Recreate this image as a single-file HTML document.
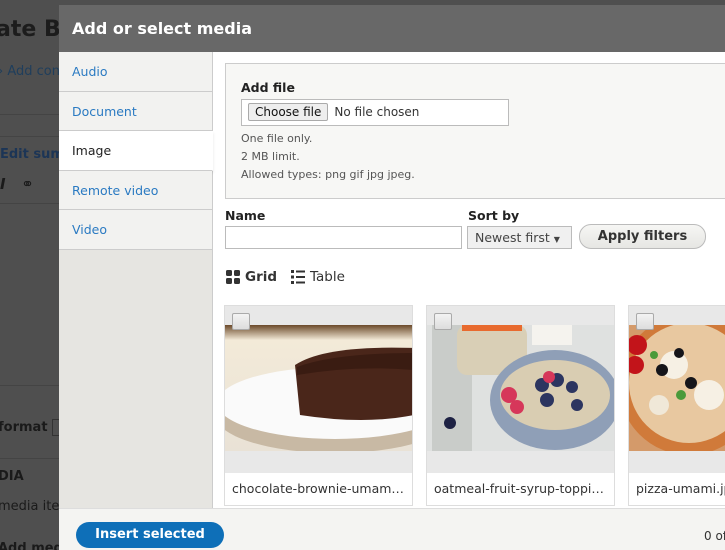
<!DOCTYPE html>
<html><head><meta charset="utf-8"><style>
*{box-sizing:border-box;margin:0;padding:0}
html,body{width:725px;height:550px;overflow:hidden}
body{background:#4f4f4f;font-family:"DejaVu Sans","Liberation Sans",sans-serif;position:relative}
.bg{position:absolute;color:#1a1a1a;font-size:13px;white-space:nowrap}
.dlg{position:absolute;left:59px;top:5px;width:666px;height:545px;background:#fff;overflow:hidden}
.hd{height:47px;background:#686868;color:#fff;font-weight:bold;font-size:16px;padding:14px 0 0 13px}
.side{position:absolute;left:0;top:47px;width:154px;height:460px;background:#e6e5e1;border-right:1px solid #ccc}
.tab{height:39.5px;border-bottom:1px solid #ccc;background:#f2f2f0;color:#2a7ac2;font-size:12.5px;padding:12px 0 0 13px}
.tab.on{background:#fff;color:#222;border-right:1px solid #fff;margin-right:-1px;box-shadow:0 2px 3px rgba(0,0,0,.1)}
.upl{position:absolute;left:166px;top:58px;width:520px;height:136px;background:#f7f7f5;border:1px solid #ccc;padding:16px 0 0 15px;font-size:11px;color:#555}
.lbl{font-weight:bold;font-size:12.5px;color:#222}
.file{margin-top:4px;width:268px;height:27px;border:1px solid #bbb;background:#fff;font-size:12px;color:#333;padding:3px 0 0 6px}
.file span{display:inline-block;background:#eee;border:1px solid #aaa;border-radius:2px;padding:1px 6px;margin-right:6px;color:#111}
.main{position:absolute}
.card{position:absolute;top:300px;width:189px;height:201px;background:#e8e8e8;border:1px solid #ddd}
.card .img{position:absolute;left:0;top:19px;width:100%;height:126px;overflow:hidden}
.card .cb{position:absolute;left:7px;top:7px;width:18px;height:17px;border:1px solid #aaa;border-radius:2px;background:linear-gradient(#f3f3f3,#ddd);z-index:2}
.card .nm{position:absolute;left:0;bottom:0;width:100%;height:32px;background:#fff;font-size:12.5px;color:#333;padding:8px 0 0 7px;white-space:nowrap;overflow:hidden}
.ft{position:absolute;left:0;top:503px;width:666px;height:42px;background:#f4f4f2;border-top:1px solid #ddd}
.btn{position:absolute;left:17px;top:13px;width:148px;height:26px;border-radius:13px;background:#0e6fb8;color:#fff;font-weight:bold;font-size:13px;text-align:center;line-height:26px}
</style></head><body>
<div class="bg" style="left:-4px;top:17px;font-size:22px;font-weight:bold;color:#1c1c1c">ate Ba</div>
<div class="bg" style="left:-2px;top:64px;color:#1f3e5c">› Add cont</div>
<div class="bg" style="left:0;top:114px;width:60px;border-top:1px solid #444"></div>
<div class="bg" style="left:0;top:147px;font-weight:bold;color:#1c3556">Edit sum</div>
<div class="bg" style="left:0;top:136px;width:60px;border-top:1px solid #444"></div>
<div class="bg" style="left:0;top:175px;font-style:italic;font-weight:bold;font-size:15px">I &nbsp;&nbsp;<span style="font-style:normal">⚭</span></div>
<div class="bg" style="left:0;top:203px;width:60px;border-top:1px solid #444"></div>
<div class="bg" style="left:0;top:385px;width:60px;border-top:1px solid #444"></div>
<div class="bg" style="left:-2px;top:420px;font-weight:bold">format <span style="border:1px solid #333;padding:0 6px;font-weight:normal">E</span></div>
<div class="bg" style="left:0;top:458px;width:60px;border-top:1px solid #444"></div>
<div class="bg" style="left:-2px;top:469px;font-weight:bold">DIA</div>
<div class="bg" style="left:-2px;top:499px">media item</div>
<div class="bg" style="left:-2px;top:541px;font-weight:bold">Add med</div>

<div class="dlg">
<div class="hd">Add or select media</div>
<div class="side">
<div class="tab">Audio</div><div class="tab">Document</div><div class="tab on">Image</div><div class="tab">Remote video</div><div class="tab">Video</div>
</div>
<div class="upl">
<div class="lbl">Add file</div>
<div class="file"><span>Choose file</span>No file chosen</div>
<div style="margin-top:6px">One file only.</div>
<div style="margin-top:5px">2 MB limit.</div>
<div style="margin-top:5px">Allowed types: png gif jpg jpeg.</div>
</div>
<div class="main lbl" style="left:166px;top:203px">Name</div>
<div class="main" style="left:166px;top:221px;width:237px;height:23px;border:1px solid #bbb;background:#fff"></div>
<div class="main lbl" style="left:409px;top:203px">Sort by</div>
<div class="main" style="left:408px;top:221px;width:105px;height:23px;border:1px solid #bbb;background:#f0f0f0;font-size:12.5px;color:#444;padding:3px 0 0 7px;white-space:nowrap">Newest first <span style="font-size:8px">▼</span></div>
<div class="main" style="left:520px;top:219px;width:127px;height:25px;border:1px solid #bbb;border-radius:12px;background:linear-gradient(#f6f6f4,#e6e6e3);font-size:13px;font-weight:bold;color:#333;text-align:center;padding-top:4px">Apply filters</div>
<svg class="main" style="left:167px;top:265px" width="14" height="14"><rect x="0" y="0" width="6" height="6" rx="1.5" fill="#333"/><rect x="8" y="0" width="6" height="6" rx="1.5" fill="#333"/><rect x="0" y="8" width="6" height="6" rx="1.5" fill="#333"/><rect x="8" y="8" width="6" height="6" rx="1.5" fill="#333"/></svg>
<div class="main" style="left:186px;top:264px;font-size:13.5px;color:#333;font-weight:bold">Grid</div>
<svg class="main" style="left:232px;top:265px" width="14" height="14"><g fill="#333"><rect x="0" y="0" width="3" height="3"/><rect x="0" y="5.5" width="3" height="3"/><rect x="0" y="11" width="3" height="3"/><rect x="5" y="0.5" width="9" height="2"/><rect x="5" y="6" width="9" height="2"/><rect x="5" y="11.5" width="9" height="2"/></g></svg>
<div class="main" style="left:251px;top:264px;font-size:13.5px;color:#333">Table</div>

<div class="card" style="left:165px"><div class="cb"></div><div class="img">
<svg width="189" height="126"><defs><linearGradient id="a" x1="0" y1="0" x2="0" y2="1"><stop offset="0" stop-color="#6b4a2a"/><stop offset=".12" stop-color="#f3ead8"/><stop offset="1" stop-color="#e9e2d6"/></linearGradient></defs><rect width="189" height="126" fill="url(#a)"/><ellipse cx="110" cy="90" rx="120" ry="38" fill="#c8b9a4"/><ellipse cx="110" cy="78" rx="118" ry="36" fill="#fafafa"/><path d="M70 40 Q100 20 189 23 L189 90 Q140 100 75 90 Z" fill="#4a261a"/><path d="M72 42 Q110 28 189 28 L189 45 Q130 40 72 50 Z" fill="#3a1c12"/></svg></div><div class="nm">chocolate-brownie-umam…</div></div>
<div class="card" style="left:367px"><div class="cb"></div><div class="img">
<svg width="189" height="126"><rect width="189" height="126" fill="#dfe1e0"/><rect x="5" y="0" width="40" height="126" fill="#c9ccc9"/><rect x="30" y="0" width="70" height="50" rx="10" fill="#d9cfb6"/><rect x="35" y="0" width="60" height="6" fill="#e86a2e"/><rect x="105" y="0" width="40" height="20" fill="#f5f3ee"/><ellipse cx="128" cy="75" rx="65" ry="50" fill="#8f9fb7"/><ellipse cx="128" cy="70" rx="55" ry="35" fill="#d9cdb2"/><circle cx="115" cy="60" r="7" fill="#2c3560"/><circle cx="130" cy="55" r="7" fill="#2c3560"/><circle cx="145" cy="62" r="6" fill="#2c3560"/><circle cx="120" cy="75" r="7" fill="#2c3560"/><circle cx="150" cy="80" r="6" fill="#2c3560"/><circle cx="82" cy="70" r="8" fill="#d6375a"/><circle cx="90" cy="82" r="7" fill="#d6375a"/><circle cx="122" cy="52" r="6" fill="#d6375a"/><circle cx="23" cy="98" r="6" fill="#1e2244"/></svg></div><div class="nm">oatmeal-fruit-syrup-toppi…</div></div>
<div class="card" style="left:569px"><div class="cb"></div><div class="img">
<svg width="189" height="126"><rect width="189" height="126" fill="#d49a6a"/><circle cx="60" cy="60" r="70" fill="#d07a3a"/><circle cx="60" cy="58" r="60" fill="#e8c8a0"/><circle cx="45" cy="40" r="14" fill="#f6f0e4"/><circle cx="80" cy="70" r="15" fill="#f6f0e4"/><circle cx="30" cy="80" r="10" fill="#f0e8d8"/><circle cx="50" cy="28" r="5" fill="#15151a"/><circle cx="33" cy="45" r="6" fill="#15151a"/><circle cx="62" cy="58" r="6" fill="#15151a"/><circle cx="52" cy="70" r="5" fill="#4a9a3a"/><circle cx="25" cy="30" r="4" fill="#4a9a3a"/><circle cx="8" cy="20" r="10" fill="#c2141a"/><circle cx="6" cy="40" r="9" fill="#c2141a"/></svg></div><div class="nm">pizza-umami.jpg</div></div>

<div class="ft"><div class="btn">Insert selected</div><div style="position:absolute;left:645px;top:20px;font-size:12px;color:#333;white-space:nowrap">0 of</div></div>
</div>
</body></html>
